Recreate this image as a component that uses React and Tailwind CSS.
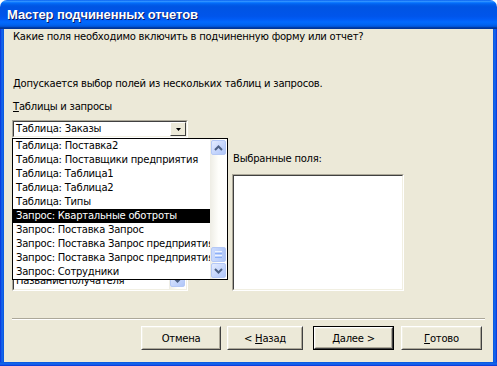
import React from "react";

const ddItems = [
  "Таблица: Поставка2",
  "Таблица: Поставщики предприятия",
  "Таблица: Таблица1",
  "Таблица: Таблица2",
  "Таблица: Типы",
  "Запрос: Квартальные оботроты",
  "Запрос: Поставка Запрос",
  "Запрос: Поставка Запрос предприятия",
  "Запрос: Поставка Запрос предприятия",
  "Запрос: Сотрудники",
];

const fields = [
  "КодЗаказа",
  "КодКлиента",
  "КодСотрудника",
  "ДатаРазмещения",
  "ДатаНазначения",
  "ДатаИсполнения",
  "СтоимостьДоставки",
  "НазваниеПолучателя",
  "АдресПолучателя",
];

function Chevron({ up }) {
  return (
    <svg width="9" height="6" viewBox="0 0 9 6">
      <path
        d={up ? "M1 5 L4.5 1.5 L8 5" : "M1 1 L4.5 4.5 L8 1"}
        fill="none"
        stroke="#4D6185"
        strokeWidth="2"
      />
    </svg>
  );
}

function SbButton({ up }) {
  return (
    <div className="w-[15px] h-[15px] shrink-0 rounded-[2px] border border-[#B4C8F6] bg-[linear-gradient(135deg,#E4ECFE,#C3D4FC_60%,#B0C6F8)] flex items-center justify-center">
      <Chevron up={up} />
    </div>
  );
}

function Thumb() {
  return (
    <div className="w-[15px] h-[15px] rounded-[2px] border border-[#B4C8F6] bg-[linear-gradient(to_right,#CBDAFC,#BCD0FB_60%,#AFC5F8)] flex flex-col items-center justify-center gap-[1px]">
      <div className="w-[7px] h-[1px] bg-[#EEF4FE]" />
      <div className="w-[7px] h-[1px] bg-[#8CB0F8]" />
      <div className="w-[7px] h-[1px] bg-[#EEF4FE]" />
      <div className="w-[7px] h-[1px] bg-[#8CB0F8]" />
    </div>
  );
}

function Sunken({ className = "", children }) {
  return (
    <div className={"border border-t-[#ACA899] border-l-[#ACA899] border-b-white border-r-white " + className}>
      <div className="w-full h-full border border-t-[#404040] border-l-[#404040] border-b-[#F1EFE2] border-r-[#F1EFE2] bg-white overflow-hidden">
        {children}
      </div>
    </div>
  );
}

function Btn({ children, w, def }) {
  const inner = (
    <div className="w-full h-full border border-t-white border-l-white border-b-[#404040] border-r-[#404040]">
      <div className="w-full h-full border border-t-[#F1EFE2] border-l-[#F1EFE2] border-b-[#ACA899] border-r-[#ACA899] flex items-center justify-center bg-[#ECE9D8]">
        {children}
      </div>
    </div>
  );
  return (
    <div className={(def ? "border border-black " : "") + "h-[24px] shrink-0 " + w}>
      {inner}
    </div>
  );
}

export default function App() {
  return (
    <div className="w-[497px] h-[366px] bg-white font-['DejaVu_Sans',sans-serif] text-[10px] tracking-[-0.23px] text-black select-none">
      <div className="w-full h-full flex flex-col rounded-t-[7px] overflow-hidden">
        <div className="h-[29px] shrink-0 flex items-center pl-[7px] bg-[linear-gradient(to_bottom,#0058EE_0%,#3593FF_4%,#288EFF_6%,#127DFF_8%,#036FFC_10%,#0262EE_14%,#0057E5_20%,#0054E3_24%,#0055EB_56%,#005BF5_66%,#026AFE_76%,#0062EF_86%,#0052D6_92%,#0040AB_94%,#003092_100%)]">
          <span className="font-['Liberation_Sans',sans-serif] font-bold text-[13px] text-white [text-shadow:1px_1px_0_#0A1864] tracking-[-0.1px]">
            Мастер подчиненных отчетов
          </span>
        </div>
        <div className="flex-1 flex">
          <div className="w-[4px] bg-[linear-gradient(to_right,#0831D9,#166AEE_50%,#0855DD)]" />
          <div className="flex-1 bg-[#ECE9D8] flex flex-col pl-[8px]">
            <div className="mt-[1px] leading-[14px] pl-[1px]">
              Какие поля необходимо включить в подчиненную форму или отчет?
            </div>
            <div className="mt-[33px] leading-[14px] pl-[1px]">
              Допускается выбор полей из нескольких таблиц и запросов.
            </div>
            <div className="mt-[9px] leading-[14px] pl-[1px]">
              <span className="underline underline-offset-[1px]">Т</span>аблицы и запросы
            </div>
            <div className="relative mt-[6px] w-[176px] h-[18px]">
              <Sunken className="w-full h-full">
                <div className="flex h-full">
                  <div className="flex-1 leading-[14px] pl-[2px]">Таблица: Заказы</div>
                  <div className="w-[16px] h-[14px] border border-t-white border-l-white border-b-[#404040] border-r-[#404040] bg-[#ECE9D8] flex items-center justify-center">
                    <svg width="5" height="3" viewBox="0 0 5 3">
                      <path d="M0 0 H5 L2.5 3 Z" fill="#000" />
                    </svg>
                  </div>
                </div>
              </Sunken>
              <div className="absolute left-0 top-[18px] w-[216px] h-[142px] border border-black bg-white flex z-10">
                <div className="flex-1 overflow-hidden">
                  {ddItems.map((t, i) => (
                    <div
                      key={i}
                      className={
                        "h-[14px] leading-[14px] whitespace-nowrap pl-[3px] " +
                        (i === 5 ? "bg-black text-white" : "")
                      }
                    >
                      {t}
                    </div>
                  ))}
                </div>
                <div className="w-[17px] shrink-0 bg-[linear-gradient(to_right,#EEEDE5,#FEFEFB_50%,#FFFFFF)] flex flex-col items-center pt-[1px] pb-[1px]">
                  <SbButton up />
                  <div className="flex-1 flex flex-col justify-end pb-[1px]">
                    <Thumb />
                  </div>
                  <SbButton />
                </div>
              </div>
            </div>
            <div className="flex mt-[14px]">
              <div className="w-[176px] flex flex-col">
                <div className="leading-[14px] pl-[1px]">Доступные поля:</div>
                <Sunken className="mt-[8px] w-[176px] h-[117px]">
                  <div className="flex h-full">
                    <div className="flex-1 overflow-hidden">
                      {fields.map((f, i) => (
                        <div key={i} className="h-[14px] leading-[14px] pl-[2px] whitespace-nowrap">
                          {f}
                        </div>
                      ))}
                    </div>
                    <div className="w-[17px] shrink-0 bg-[linear-gradient(to_right,#EEEDE5,#FEFEFB_50%,#FFFFFF)] flex flex-col items-center pt-[1px] pb-[2px]">
                      <SbButton up />
                      <div className="flex-1" />
                      <SbButton />
                    </div>
                  </div>
                </Sunken>
              </div>
              <div className="ml-[44px] w-[172px] flex flex-col">
                <div className="leading-[14px] pl-[1px]">Выбранные поля:</div>
                <Sunken className="mt-[8px] w-[172px] h-[117px]" />
              </div>
            </div>
            <div className="mt-[27px] mr-[8px] h-[2px] flex flex-col">
              <div className="h-[1px] bg-[#ACA899]" />
              <div className="h-[1px] bg-white" />
            </div>
            <div className="flex mt-[6px] pl-[129px]">
              <Btn w="w-[80px]">Отмена</Btn>
              <div className="ml-[6px]">
                <Btn w="w-[76px]">
                  &lt;&nbsp;<span className="underline underline-offset-[1px]">Н</span>азад
                </Btn>
              </div>
              <div className="ml-[10px]">
                <Btn w="w-[81px]" def>
                  <span className="underline underline-offset-[1px]">Д</span>алее &gt;
                </Btn>
              </div>
              <div className="ml-[7px]">
                <Btn w="w-[81px]">
                  <span className="underline underline-offset-[1px]">Г</span>отово
                </Btn>
              </div>
            </div>
          </div>
          <div className="w-[4px] bg-[linear-gradient(to_right,#0855DD,#166AEE_50%,#0831D9)]" />
        </div>
        <div className="h-[4px] shrink-0 bg-[linear-gradient(to_bottom,#0855DD,#166AEE_50%,#0831D9)]" />
      </div>
    </div>
  );
}
